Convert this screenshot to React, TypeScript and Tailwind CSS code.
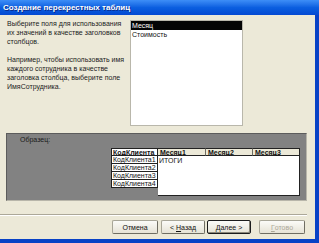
const btnBase =
  'h-[14px] flex items-center justify-center rounded-[2px] bg-gradient-to-b from-[#fbfbf8] to-[#e6e3d6] text-[7px] leading-none'

function WizardButton({ children, width, variant }: { children: React.ReactNode; width: string; variant?: 'default' | 'disabled' }) {
  const border =
    variant === 'default'
      ? 'border border-[#1c1c1c] shadow-[inset_-1px_-1px_0_#8a877a]'
      : 'border border-[#a8a698] border-r-[#6f6d62] border-b-[#6f6d62]'
  const text = variant === 'disabled' ? 'text-[#aca899]' : 'text-[#111]'
  return <div className={`${btnBase} ${border} ${text} ${width}`}>{children}</div>
}

export default function App() {
  const labels = ['КодКлиента1', 'КодКлиента2', 'КодКлиента3', 'КодКлиента4']

  return (
    <div className="w-[319px] h-[243px] flex flex-col overflow-hidden bg-[#0842c6] font-['Liberation_Sans',Arial,sans-serif]">
      {/* Title bar */}
      <div className="h-[15px] shrink-0 flex items-center pl-[3px] bg-gradient-to-b from-[#3d8ef7] via-[#0b5fe0] to-[#0449d2] text-white text-[8px] font-bold [text-shadow:1px_1px_0_#0a2a8a]">
        Создание перекрестных таблиц
      </div>

      {/* Window frame */}
      <div className="flex-1 flex flex-col border-r-4 border-b-4 border-[#0842c6] bg-[#ece9d8]">
        {/* Top area: help text + field list */}
        <div className="flex pt-[4px]">
          <div className="w-[130px] pl-[7px] text-[7px] leading-[9px] text-[#222]">
            Выберите поля для использования
            <br />
            их значений в качестве заголовков
            <br />
            столбцов.
            <br />
            <br />
            Например, чтобы использовать имя
            <br />
            каждого сотрудника в качестве
            <br />
            заголовка столбца, выберите поле
            <br />
            ИмяСотрудника.
          </div>
          <div className="mt-[1px] w-[113px] h-[106px] bg-white border border-[#b9b7ab] text-[7px] leading-[9px]">
            <div className="h-[9px] pl-[1px] bg-[#050505] text-white">Месяц</div>
            <div className="h-[9px] pl-[1px] text-[#111]">Стоимость</div>
          </div>
        </div>

        {/* Sample panel */}
        <div className="mt-[7px] ml-[6px] w-[301px] h-[68px] bg-[#828282] border border-[#5c5c5c] border-r-[#b8b6aa] border-b-[#b8b6aa]">
          <div className="pl-[13px] pt-[1px] text-[7px] leading-[9px] text-[#1a1a1a]">Образец:</div>
          <div className="mt-[4px] ml-[104px] flex text-[7px] leading-[7px] text-[#111]">
            {/* Row heading column */}
            <div className="w-[47px] flex flex-col">
              <div className="h-[8px] pl-[1px] bg-white border border-[#222] font-bold">КодКлиента</div>
              {labels.map(l => (
                <div key={l} className="h-[8px] pl-[1px] bg-white border-x border-b border-[#222]">
                  {l}
                </div>
              ))}
            </div>
            {/* Month columns */}
            <div className="flex flex-col">
              <div className="flex h-[8px]">
                <div className="w-[48px] pl-[2px] bg-[#ece9d8] border-t border-b border-[#222] border-r-[#6f6d62] border-r font-bold">Месяц1</div>
                <div className="w-[47px] pl-[2px] bg-[#ece9d8] border-t border-b border-[#222] border-r-[#6f6d62] border-r font-bold">Месяц2</div>
                <div className="w-[47px] pl-[2px] bg-[#ece9d8] border-t border-b border-r border-[#222] font-bold">Месяц3</div>
              </div>
              <div className="w-[142px] h-[40px] pl-[1px] pt-[1px] bg-white border-r border-b border-[#222]">ИТОГИ</div>
            </div>
          </div>
        </div>

        {/* Separator */}
        <div className="mt-[13px] w-[307px] h-[2px] border-t border-[#aca899] border-b border-b-white" />

        {/* Buttons */}
        <div className="mt-[4px] flex pl-[112px]">
          <WizardButton width="w-[46px]">Отмена</WizardButton>
          <div className="ml-[3px]">
            <WizardButton width="w-[44px]">
              &lt; <span className="underline ml-[2px]">Н</span>азад
            </WizardButton>
          </div>
          <div className="ml-[2px]">
            <WizardButton width="w-[44px]" variant="default">
              <span className="underline">Д</span>алее &gt;
            </WizardButton>
          </div>
          <div className="ml-[8px]">
            <WizardButton width="w-[46px]" variant="disabled">
              <span className="underline">Г</span>отово
            </WizardButton>
          </div>
        </div>
      </div>
    </div>
  )
}
